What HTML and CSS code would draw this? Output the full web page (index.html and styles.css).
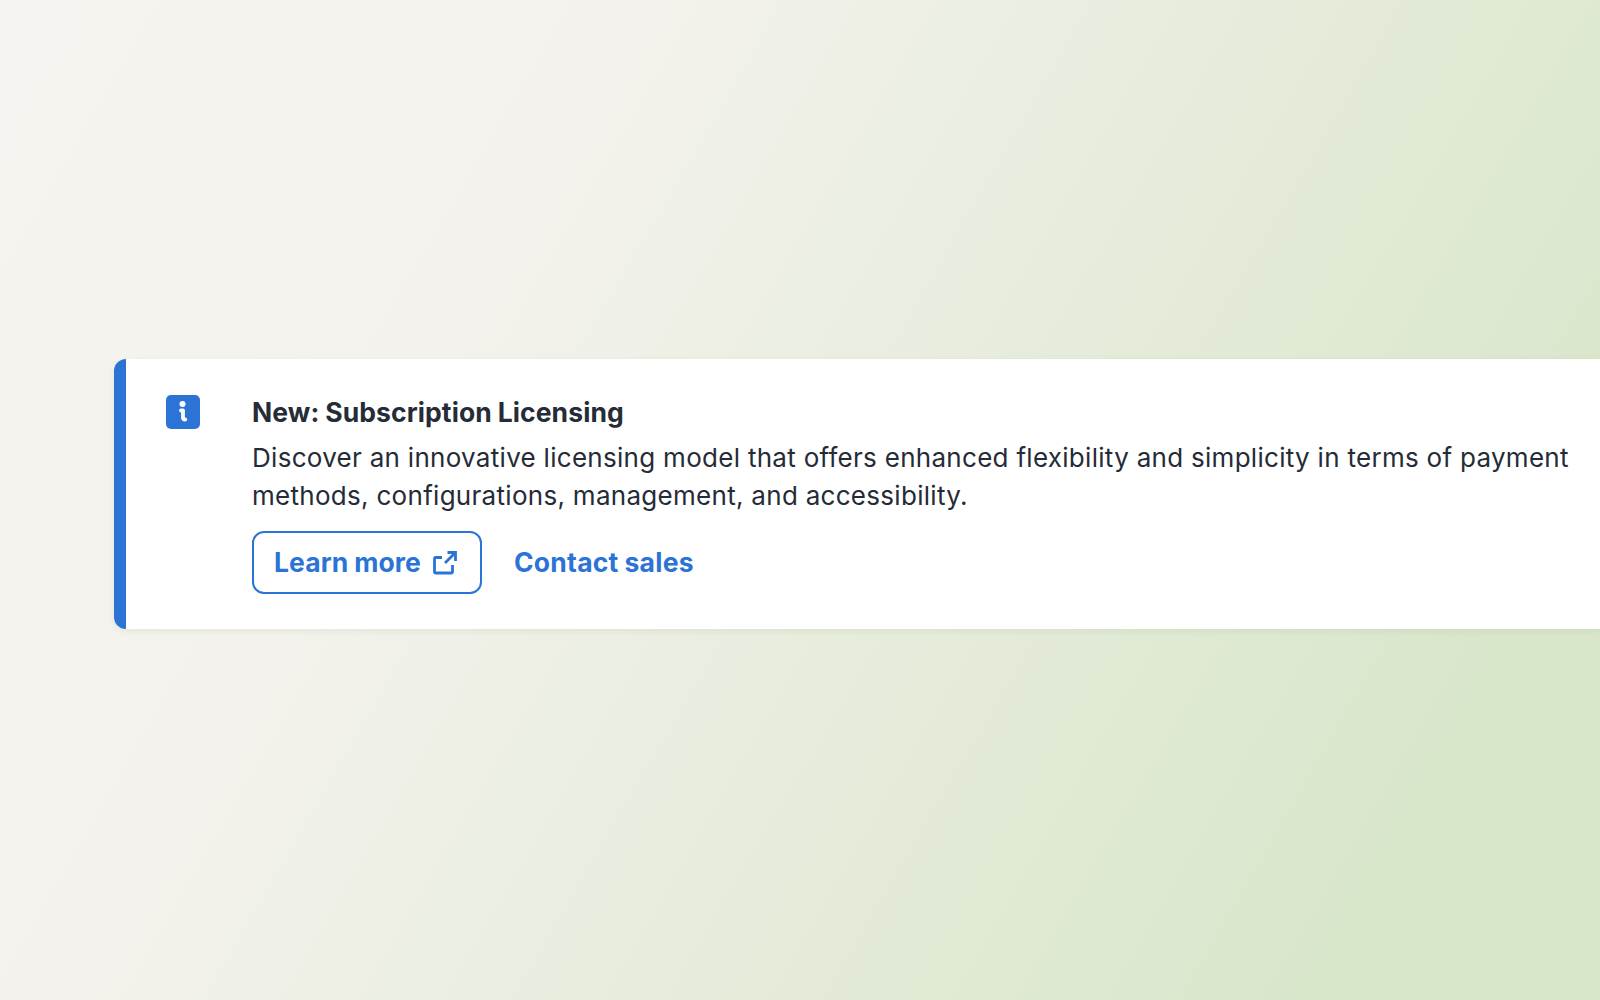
FILE: index.html
```html
<!DOCTYPE html>
<html lang="en">
<head>
<meta charset="utf-8">
<title>Subscription Licensing</title>
<link rel="stylesheet" href="styles.css">
</head>
<body>
<section class="notice">
  <div class="notice-icon">
    <svg width="34" height="34" viewBox="0 0 34 34"><rect width="34" height="34" rx="5" fill="#2b74d6"/><circle cx="16.500" cy="9" r="3" fill="#fff"/><path d="M15 15.500h2v7q0 2 2.200 2" fill="none" stroke="#fff" stroke-width="3.800" stroke-linecap="round" stroke-linejoin="round"/></svg>
  </div>
  <div class="notice-body">
    <h2 class="notice-title">New: Subscription Licensing</h2>
    <p class="notice-text">Discover an innovative licensing model that offers enhanced flexibility and simplicity in terms of payment methods, configurations, management, and accessibility.</p>
    <div class="notice-actions">
      <a class="btn-outline"><span class="btn-label">Learn more</span>
        <svg class="ext-icon" width="24" height="24" viewBox="0 0 24 24" fill="none" stroke="#2b74d6" stroke-width="2.800"><path d="M9 6.500H2.500a1 1 0 0 0-1 1V21a1 1 0 0 0 1 1H18.500a1 1 0 0 0 1-1V14"/><path d="M12 12 22 2"/><path d="M14.500 1.500h8v8.500"/></svg>
      </a>
      <a class="link">Contact sales</a>
    </div>
  </div>
</section>
</body>
</html>
```
FILE: styles.css
```css
* { box-sizing: border-box; }
html, body { height: 100%; }
body {
  margin: 0;
  padding: 359px 0 0 114px;
  overflow: hidden;
  background: linear-gradient(120deg, #f6f4f0 0%, #f3f2ec 30%, #d8e6ca 87%, #d8e6ca 100%);
  font-family: Inter, "Liberation Sans", sans-serif;
  color: #252c37;
}
.notice {
  display: flex;
  height: 270px;
  padding: 36px 0 0 40px;
  background: #fff;
  border-left: 12px solid #2b74d6;
  border-radius: 12px 0 0 12px;
  box-shadow: 0 2px 6px rgba(120, 140, 100, 0.12);
}
.notice-icon { flex: 0 0 86px; }
.notice-icon svg { display: block; }
.notice-body { flex: 1; }
.notice-title {
  margin: 0;
  font-size: 26.500px;
  line-height: 34px;
  font-weight: 700;
  letter-spacing: 0.1px;
  word-spacing: -0.6px;
}
.notice-text {
  margin: 10px 0 0;
  font-size: 26px;
  line-height: 38px;
  font-weight: 400;
  letter-spacing: 0.29px;
}
.notice-actions {
  display: flex;
  align-items: center;
  gap: 32px;
  margin-top: 16px;
}
.btn-outline, .link {
  font-size: 26.500px;
  line-height: 30px;
  font-weight: 700;
  letter-spacing: 0.1px;
  word-spacing: -0.6px;
  color: #2b74d6;
}
.link { letter-spacing: 0.25px; }
.btn-label, .link { padding-bottom: 2px; }
.btn-outline {
  display: flex;
  align-items: center;
  gap: 12px;
  height: 63px;
  padding: 0 23px 0 20px;
  border: 2px solid #2b74d6;
  border-radius: 12px;
}
```
